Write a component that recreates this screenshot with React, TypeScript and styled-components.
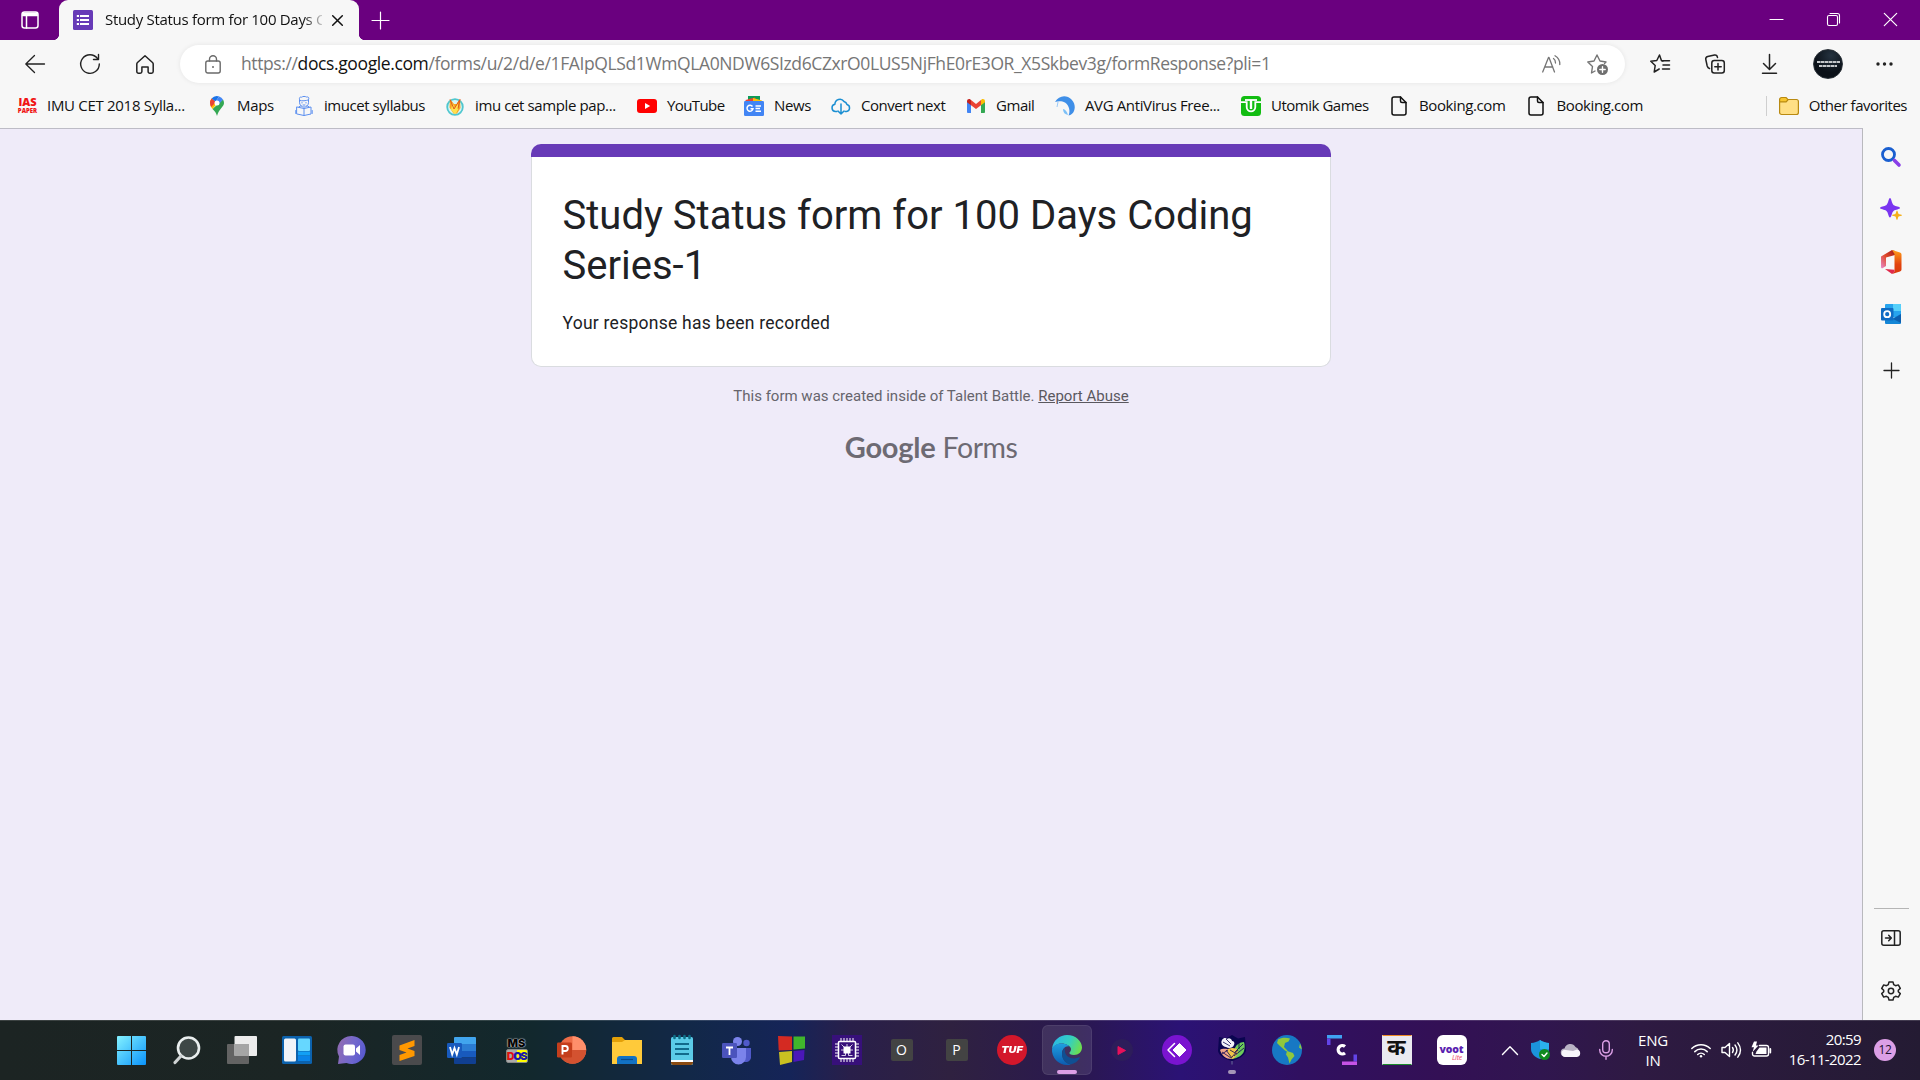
import React from "react";
import styled, { createGlobalStyle } from "styled-components";

const ui = `"Segoe UI", "Open Sans", "Noto Sans", sans-serif`;

const GlobalStyle = createGlobalStyle`
  *, *::before, *::after { box-sizing: border-box; }
  body { margin: 0; overflow: hidden; background: #efebf9; font-family: ${ui}; }
`;

const Screen = styled.div`
  width: 1920px;
  height: 1080px;
  display: flex;
  flex-direction: column;
  overflow: hidden;
`;

const Icon = styled.svg<{ $w?: number; $h?: number }>`
  display: block;
  flex: none;
  width: ${(p) => p.$w ?? 20}px;
  height: ${(p) => p.$h ?? p.$w ?? 20}px;
  overflow: visible;
`;

const Text = styled.span<{ $size?: number; $track?: number }>`
  display: block;
  padding-bottom: 2px;
  font-size: ${(p) => p.$size ?? 15}px;
  letter-spacing: ${(p) => p.$track ?? 0}px;
  white-space: nowrap;
`;

/* ---------- title bar ---------- */

const TitleBar = styled.header`
  flex: none;
  height: 40px;
  display: flex;
  background: #6a007f;
`;

const TabActions = styled.div`
  width: 59px;
  display: flex;
  align-items: center;
  padding-left: 21px;
  border-bottom-right-radius: 6px;
`;

const Tab = styled.div`
  position: relative;
  width: 300px;
  height: 40px;
  display: flex;
  align-items: center;
  padding-left: 14px;
  background: #f7f7f7;
  border-radius: 9px 9px 0 0;
  &::before,
  &::after {
    content: "";
    position: absolute;
    bottom: 0;
    width: 5px;
    height: 5px;
  }
  &::before {
    left: -5px;
    background: radial-gradient(circle at 0 0, transparent 4.6px, #f7f7f7 5px);
  }
  &::after {
    right: -5px;
    background: radial-gradient(circle at 100% 0, transparent 4.6px, #f7f7f7 5px);
  }
`;

const TabTitle = styled.div`
  width: 217px;
  margin-left: 12px;
  color: #111;
  mask-image: linear-gradient(90deg, #000 198px, transparent 222px);
`;

const CloseSlot = styled.div`
  width: 32px;
  margin-left: -0.5px;
  display: flex;
  justify-content: center;
`;

const NewTab = styled.div`
  width: 43px;
  display: flex;
  align-items: center;
  justify-content: center;
`;

const WindowButtons = styled.div`
  margin-left: auto;
  margin-right: 1px;
  padding-bottom: 1px;
  display: flex;
`;

const WindowButton = styled.div`
  width: 57px;
  display: flex;
  align-items: center;
  justify-content: center;
`;

/* ---------- toolbar ---------- */

const Toolbar = styled.div`
  flex: none;
  height: 48px;
  display: flex;
  align-items: center;
  padding-left: 7px;
  background: #f7f7f7;
`;

const Slot = styled.div<{ $w?: number }>`
  width: ${(p) => p.$w ?? 55}px;
  flex: none;
  display: flex;
  align-items: center;
  justify-content: center;
`;

const AddressBar = styled.div`
  flex: none;
  width: 1445px;
  height: 38px;
  margin: 0 7px 0 8px;
  padding: 0 5px 0 25px;
  display: flex;
  align-items: center;
  background: #fff;
  border-radius: 19px;
  box-shadow: 0 0 5px rgba(0, 0, 0, 0.08);
`;

const Url = styled.div`
  flex: 1;
  margin-left: 20px;
  color: #767676;
  white-space: nowrap;
`;

const Host = styled.span`
  color: #111;
`;

const Avatar = styled.div`
  width: 30px;
  height: 30px;
  border-radius: 50%;
  display: flex;
  flex-direction: column;
  align-items: center;
  justify-content: center;
  gap: 2px;
  background: radial-gradient(circle at 60% 20%, #24323f, #0b1118 60%);
  border: 1px solid #2a3138;
`;

const AvatarLine = styled.i<{ $w: number }>`
  width: ${(p) => p.$w}px;
  height: 2px;
  background: repeating-linear-gradient(90deg, #c4c7ca 0 3px, #70777e 3px 4px);
`;

/* ---------- bookmarks ---------- */

const Bookmarks = styled.nav`
  flex: none;
  height: 40px;
  padding: 0 13px 4px 17px;
  display: flex;
  align-items: center;
  background: #f7f7f7;
  color: #111;
`;

const Bookmark = styled.div<{ $w?: number }>`
  width: ${(p) => (p.$w ? `${p.$w}px` : "auto")};
  display: flex;
  align-items: center;
  gap: 11px;
  flex: none;
`;

const BookmarkIcon = styled.div`
  width: 19px;
  display: flex;
  justify-content: center;
`;

const Others = styled.div`
  margin-left: auto;
  height: 20px;
  padding-left: 12px;
  border-left: 1px solid #cfcfcf;
  display: flex;
  align-items: center;
  gap: 10px;
`;

const IasIcon = styled.div`
  width: 20px;
  margin-left: 2px;
  display: flex;
  flex-direction: column;
  align-items: center;
  color: #f01414;
  font: 800 11px/10px "Open Sans", sans-serif;
  & > small {
    font-size: 6px;
    line-height: 8px;
  }
`;

/* ---------- page ---------- */

const Body = styled.div`
  flex: 1;
  min-height: 0;
  display: flex;
`;

const Page = styled.main`
  width: 1863px;
  padding-top: 15px;
  border-top: 1px solid #bdbcc6;
  border-right: 1px solid #b9b9bd;
  background: #efebf9;
  display: flex;
  flex-direction: column;
  align-items: center;
  font-family: Roboto, sans-serif;
`;

const Card = styled.section`
  width: 800px;
  height: 223px;
  display: flex;
  flex-direction: column;
`;

const CardBand = styled.div`
  flex: none;
  height: 13px;
  border-radius: 10px 10px 0 0;
  background: #673ab7;
`;

const CardBody = styled.div`
  flex: 1;
  padding: 34px 30px 0 30.5px;
  background: #fff;
  border: 1px solid #dadce0;
  border-top: 0;
  border-radius: 0 0 10px 10px;
`;

const FormTitle = styled.h1`
  margin: 0;
  font-size: 40px;
  font-weight: 400;
  line-height: 50px;
  color: #202124;
`;

const Message = styled.p`
  margin: 20px 0 0;
  font-size: 17.5px;
  line-height: 25px;
  letter-spacing: 0.25px;
  color: #202124;
`;

const Disclaimer = styled.p`
  margin: 19px 0 0;
  font-size: 15px;
  line-height: 20px;
  color: #66646c;
`;

const Abuse = styled.a`
  color: #5a585f;
  text-decoration: underline;
`;

const Logo = styled.div`
  margin-top: 23px;
  display: flex;
  align-items: baseline;
  gap: 7px;
  color: #6d6a73;
  line-height: 36px;
`;

const LogoGoogle = styled.span`
  font-family: Lato, sans-serif;
  font-size: 29px;
  font-weight: 700;
  letter-spacing: -0.2px;
`;

const LogoForms = styled.span`
  font-family: Lato, sans-serif;
  font-size: 28.5px;
  font-weight: 400;
  letter-spacing: -0.5px;
`;

/* ---------- edge sidebar ---------- */

const Sidebar = styled.aside`
  flex: 1;
  padding: 2.5px 1px 3px 0;
  background: #f7f7f7;
  display: flex;
  flex-direction: column;
  align-items: center;
`;

const SideSlot = styled.div<{ $h?: number }>`
  height: ${(p) => p.$h ?? 52.5}px;
  display: flex;
  align-items: center;
`;

const SideRule = styled.div`
  width: 35px;
  height: 1px;
  margin-top: auto;
  margin-bottom: 3px;
  background: #b5b5b5;
`;

/* ---------- taskbar ---------- */

const Taskbar = styled.footer`
  flex: none;
  height: 60px;
  display: flex;
  align-items: center;
  box-shadow: inset 0 1px 0 rgba(255, 255, 255, 0.14);
  background: linear-gradient(
    90deg,
    #1c2423 0,
    #1b2524 300px,
    #12282d 530px,
    #122848 690px,
    #152458 790px,
    #291f4a 850px,
    #2f2140 950px,
    #2a1850 1080px,
    #2b1275 1180px,
    #301060 1300px,
    #331055 1440px,
    #30164f 1540px,
    #2e1a42 1640px,
    #241b33 1920px
  );
  color: #fff;
`;

const AppList = styled.div`
  display: flex;
  margin-left: 104px;
`;

const AppSlot = styled.div<{ $active?: boolean; $running?: boolean }>`
  position: relative;
  width: 50px;
  height: 50px;
  margin: 0 2.5px;
  display: flex;
  align-items: center;
  justify-content: center;
  border-radius: 6px;
  background: ${(p) => (p.$active ? "rgba(255,255,255,0.1)" : "none")};
  box-shadow: ${(p) => (p.$active ? "inset 0 0 0 1px rgba(255,255,255,0.07)" : "none")};
  &::after {
    content: "";
    display: ${(p) => (p.$active || p.$running ? "block" : "none")};
    position: absolute;
    bottom: 1px;
    left: 50%;
    width: ${(p) => (p.$active ? 20 : 8)}px;
    height: 4px;
    border-radius: 2px;
    transform: translateX(-50%);
    background: ${(p) => (p.$active ? "#dc9fe6" : "#a596b8")};
  }
`;

const LetterTile = styled.div`
  width: 22px;
  height: 22px;
  border-radius: 2px;
  background: #434343;
  display: flex;
  align-items: center;
  justify-content: center;
  font: 400 14px/22px "Open Sans", sans-serif;
`;

const Tuf = styled.div`
  width: 30px;
  height: 30px;
  border-radius: 50%;
  background: #d3172b;
  display: flex;
  align-items: center;
  justify-content: center;
  & > span {
    font: italic 900 9px/30px Inter, sans-serif;
    transform: scaleX(1.2);
  }
`;

const PlayTile = styled.div`
  width: 22px;
  height: 22px;
  border-radius: 50%;
  background: #2d1d5a;
  display: flex;
  align-items: center;
  justify-content: center;
`;

const HindiTile = styled.div`
  width: 30px;
  height: 30px;
  background: #eaeaf0;
  border: solid;
  border-width: 1px;
  border-color: #f08a24 #eaeaf0 #1b8a2c;
  color: #111;
  display: flex;
  align-items: center;
  justify-content: center;
  font: 700 22px/26px "Noto Sans Devanagari", "Noto Sans", sans-serif;
`;

const Voot = styled.div`
  width: 30px;
  height: 30px;
  border-radius: 6px;
  background: #fff;
  color: #5b1fb0;
  padding-top: 9px;
  display: flex;
  flex-direction: column;
  align-items: center;
  font: 800 10.5px/10px "Open Sans", sans-serif;
  letter-spacing: -0.2px;
  & > em {
    margin-left: 11px;
    font: italic 500 7px/7px "Open Sans", sans-serif;
    color: #f0486a;
  }
`;

const MsDos = styled.div`
  width: 24px;
  display: flex;
  flex-direction: column;
  align-items: center;
  color: #050505;
  font: 900 11px/12px Inter, sans-serif;
  text-shadow: 0 0 1px #ddd, 0 0 1px #ddd, 0 0 2px #aaa;
`;

const DosBox = styled.div`
  width: 22px;
  height: 14px;
  display: flex;
  justify-content: center;
  align-items: center;
  background: linear-gradient(90deg, #aaa 0 50%, #ff0 50%);
  border: 1px solid #888;
  border-radius: 2px;
  font: 900 11px/13px Inter, sans-serif;
  letter-spacing: -1.5px;
  text-shadow: none;
`;

const Ink = styled.b<{ $c: string }>`
  color: ${(p) => p.$c};
  font-weight: 900;
`;

const Tray = styled.div`
  margin-left: auto;
  display: flex;
  align-items: center;
  padding-right: 24px;
`;

const Lang = styled.div`
  width: 60px;
  padding: 0 6px 1px 0;
  text-align: center;
  font-size: 15px;
  line-height: 20px;
  letter-spacing: -0.2px;
`;

const Clock = styled.div`
  width: 85px;
  padding-bottom: 2px;
  text-align: right;
  font-size: 15px;
  line-height: 20px;
  letter-spacing: -0.6px;
`;

const Badge = styled.div`
  width: 22px;
  height: 22px;
  margin-left: 13px;
  border-radius: 50%;
  background: #dc9fe6;
  color: #201030;
  font-size: 12px;
  line-height: 21px;
  text-align: center;
  letter-spacing: -0.4px;
`;

const stroke = (color: string, w = 1.3) => ({
  fill: "none",
  stroke: color,
  strokeWidth: w,
  strokeLinecap: "round" as const,
  strokeLinejoin: "round" as const,
});

const FileIcon = () => (
  <Icon viewBox="0 0 16 20" $w={16} $h={20} {...stroke("#111", 1.5)}>
    <path d="M3 1h6.500L15 6.500V17a2 2 0 0 1-2 2H3a2 2 0 0 1-2-2V3a2 2 0 0 1 2-2z" />
    <path d="M9.500 1v4a1.500 1.500 0 0 0 1.500 1.500h4" />
  </Icon>
);

const bookmarks: { w: number; label: string; track: number; icon: React.ReactNode }[] = [
  {
    w: 190, label: "IMU CET 2018 Sylla...", track: -0.3,
    icon: <IasIcon>IAS<small>PAPER</small></IasIcon>,
  },
  {
    w: 87, label: "Maps", track: -0.3,
    icon: (
      <Icon viewBox="0 0 14 20" $w={14} $h={20}>
        <path d="M7 20c.8-3 2-5 4-7.500C13 10 14 9 14 7a7 7 0 0 0-1-3.600L2.500 13C5 15.500 6.200 17 7 20z" fill="#34a853" />
        <path d="M1.600 2.500A7 7 0 0 0 0 7c0 2.500 1 4 2.500 6L7.500 7z" fill="#fbbc04" />
        <path d="M0 7a7 7 0 0 1 1.600-4.500L6 6l-4.800 5A8 8 0 0 1 0 7z" fill="#ea4335" />
        <path d="M1.600 2.500A7 7 0 0 1 9.200.4L5.500 5.500z" fill="#1a73e8" />
        <path d="M9.200.4A7 7 0 0 1 13 3.400L8 9 5.500 5.500z" fill="#4285f4" />
        <circle cx="7" cy="7" r="2.500" fill="#fff" />
      </Icon>
    ),
  },
  {
    w: 151, label: "imucet syllabus", track: -0.45,
    icon: (
      <Icon viewBox="0 0 18 20" $w={18} $h={20} {...stroke("#5b8ff0", 1)}>
        <path d="M4.500 3.500C4 1.500 5 .8 6.500 1.200 8 .2 10 .2 11.500 1c2-.4 2.800.8 2 2.600v3a4.500 4.500 0 0 1-9 0zM4.500 4.500c3 .6 6 .4 9-.6M7 6.500v.5M11 6.500v.5M8 9h2" />
        <path d="M2 11l7 1.500L16 11v7l-7 1.500L2 18zM9 12.500v7M4 10.800l2-1M14 10.800l-2-1M.8 14.500v3M17.200 14.500v3" />
      </Icon>
    ),
  },
  {
    w: 192, label: "imu cet sample pap...", track: -0.38,
    icon: (
      <Icon viewBox="0 0 18 18" $w={18} $h={19}>
        <circle cx="9" cy="9.500" r="7.800" fill="#d8f4f4" stroke="#4fc7cf" strokeWidth="1.800" />
        <path d="M4 1.500l4 5h2.500l3.500-5 .5 9-3.500 5.500H7.500L3.500 10z" fill="#f6a623" />
        <path d="M6.500 5.500l2.500 5 3-5v6.500l-2 4H8l-3-4z" fill="#ffe14d" />
        <path d="M4 2l4 9.500 6-9.500-2 9" fill="none" stroke="#e0581c" />
      </Icon>
    ),
  },
  {
    w: 107, label: "YouTube", track: -0.6,
    icon: (
      <Icon viewBox="0 0 20 14" $w={20} $h={14}>
        <rect width="20" height="14" rx="3" fill="#f00" />
        <path d="M8 4l5.200 3L8 10z" fill="#fff" />
      </Icon>
    ),
  },
  {
    w: 87, label: "News", track: -0.4,
    icon: (
      <Icon viewBox="0 0 20 20" $w={20} $h={20}>
        <path d="M4 0h12v5H4z" fill="#0c9d58" />
        <path d="M1.500 4L11 1.500l2 6H2z" fill="#ea4335" />
        <path d="M9 2l9 2.500-1 3H9z" fill="#ffc107" />
        <rect y="5" width="20" height="15" rx="1.200" fill="#4285f4" />
        <path d="M8.500 10.500A3 3 0 1 0 9 12.700H6.500M11.500 10h5.500M11.500 12.600h4.500M11.500 15.200h5.500" fill="none" stroke="#fff" strokeWidth="1.500" />
      </Icon>
    ),
  },
  {
    w: 135, label: "Convert next", track: -0.45,
    icon: (
      <Icon viewBox="0 0 20 18" $w={20} $h={18} {...stroke("#1b8fd2", 1.500)}>
        <path d="M6 14.500H4.500a3.700 3.700 0 0 1-.6-7.300A5 5 0 0 1 13 4.500a4.300 4.300 0 0 1 3 3 3.600 3.600 0 0 1-.5 7H14" />
        <path d="M10 7v10M7 14l3 3 3-3" />
      </Icon>
    ),
  },
  {
    w: 89, label: "Gmail", track: -0.45,
    icon: (
      <Icon viewBox="0 0 18 14" $w={18} $h={14}>
        <path d="M0 2v10.500A1.200 1.200 0 0 0 1.200 14H4V5z" fill="#4285f4" />
        <path d="M18 2v10.500a1.200 1.200 0 0 1-1.200 1.500H14V5z" fill="#34a853" />
        <path d="M14 1l-5 4-5-4v5.200L9 10l5-3.800z" fill="#ea4335" />
        <path d="M0 2.200C0 .3 2-.6 3.400.5L4 1v5.200L0 3.300z" fill="#c5221f" />
        <path d="M18 2.200c0-1.900-2-2.800-3.400-1.700L14 1v5.200l4-2.900z" fill="#fbbc04" />
      </Icon>
    ),
  },
  {
    w: 186, label: "AVG AntiVirus Free...", track: -0.37,
    icon: (
      <Icon viewBox="0 0 20 20" $w={20} $h={20}>
        <path d="M0 6C3 1 8-1 13 1c6 3 8 9 6 14-1 2.500-3 4-5.500 4.500 2-4 1-10-3.500-13C7 4.800 3 5 0 6z" fill="#3f8fe8" />
        <path d="M8 13c2 .5 4 2 5 6-3-.5-5-2.500-5-6z" fill="#7cc0f7" />
        <path d="M3 6l-1 5" stroke="#9ccbf7" />
      </Icon>
    ),
  },
  {
    w: 148, label: "Utomik Games", track: -0.48,
    icon: (
      <Icon viewBox="0 0 20 20" $w={20} $h={20}>
        <rect width="20" height="20" rx="3.500" fill="#12bd12" />
        <path d="M0 6.200h5.700V11a4.300 4.300 0 0 0 8.600 0V6.200H20" fill="none" stroke="#fff" strokeWidth="1.800" />
        <path d="M10 4v9" stroke="#fff" strokeWidth="2.400" />
        <path d="M4 4h12" stroke="#fff" strokeWidth="1.800" />
      </Icon>
    ),
  },
  { w: 137.5, label: "Booking.com", track: -0.4, icon: <FileIcon /> },
  { w: 130, label: "Booking.com", track: -0.4, icon: <FileIcon /> },
];

const apps: { active?: boolean; running?: boolean; icon: React.ReactNode }[] = [
  {
    icon: (
      <Icon viewBox="0 0 29 29" $w={29}>
        <defs>
          <linearGradient id="win" x1="0" y1="0" x2="1" y2="1">
            <stop offset="0" stopColor="#84f2ff" />
            <stop offset="1" stopColor="#0a93fb" />
          </linearGradient>
        </defs>
        <path d="M0 1a1 1 0 0 1 1-1h13v14H0zM15 0h13a1 1 0 0 1 1 1v13H15zM0 15h14v14H1a1 1 0 0 1-1-1zM15 15h14v13a1 1 0 0 1-1 1H15z" fill="url(#win)" />
      </Icon>
    ),
  },
  {
    icon: (
      <Icon viewBox="0 0 28 28" $w={28}>
        <circle cx="15.500" cy="12" r="10.500" fill="#3d4746" stroke="#e9eeee" strokeWidth="2.600" />
        <path d="M8 20l-6 6.500" stroke="#cfd3d4" strokeWidth="3.200" strokeLinecap="round" />
      </Icon>
    ),
  },
  {
    icon: (
      <Icon viewBox="0 0 30 28" $w={30} $h={28}>
        <rect y="8" width="22" height="20" rx="1" fill="#636363" />
        <rect x="7.500" width="22.500" height="20" rx="1" fill="#ececec" />
        <path d="M7.500 8H22v12H7.500z" fill="#a5a5a5" />
      </Icon>
    ),
  },
  {
    icon: (
      <Icon viewBox="0 0 30 28" $w={30} $h={28}>
        <rect width="30" height="28" rx="1.500" fill="#0c62ad" />
        <rect x="2" y="2.500" width="12" height="23" rx="1.500" fill="#f1f4f8" />
        <rect x="16" y="2.500" width="12" height="12.500" rx="1" fill="#66d7ff" />
        <path d="M16 15.500h12v4H16z" fill="#12a0f5" />
        <path d="M16 20h12v5H16z" fill="#0a84e8" />
      </Icon>
    ),
  },
  {
    icon: (
      <Icon viewBox="0 0 29 28" $w={29} $h={28}>
        <defs>
          <linearGradient id="chat" x1="0" y1="0.500" x2="1" y2="0.800">
            <stop offset="0" stopColor="#8d6bb5" />
            <stop offset=".5" stopColor="#7268cd" />
            <stop offset="1" stopColor="#5457d0" />
          </linearGradient>
        </defs>
        <path d="M15 0a14 14 0 1 1-5.500 27L1 28l1-7.500A14 14 0 0 1 15 0z" fill="url(#chat)" />
        <rect x="6.500" y="8.500" width="11.500" height="11" rx="2" fill="#fff" />
        <path d="M19 12.500L23 9v10l-4-3.500z" fill="#fff" />
      </Icon>
    ),
  },
  {
    icon: (
      <Icon viewBox="0 0 30 30" $w={30}>
        <rect width="30" height="30" rx="2" fill="#4a4a4c" />
        <path d="M7.500 10.500L22.500 5v6l-7 2.500 7 2.500v5l-15 5v-6l7-2.500-7-2.500z" fill="#ff9800" />
      </Icon>
    ),
  },
  {
    icon: (
      <Icon viewBox="0 0 29 27" $w={29} $h={27}>
        <path d="M7 1a1 1 0 0 1 1-1h20a1 1 0 0 1 1 1v6H7z" fill="#41a5ee" />
        <path d="M7 7h22v7H7z" fill="#2b7cd3" />
        <path d="M7 14h22v6.500H7z" fill="#185abd" />
        <path d="M7 20.500h22V26a1 1 0 0 1-1 1H8a1 1 0 0 1-1-1z" fill="#103f91" />
        <rect y="6" width="15" height="15" rx="1.200" fill="#185abd" />
        <path d="M3 10l2.200 7.500L7.500 11l2.300 6.500L12 10" fill="none" stroke="#fff" strokeWidth="1.800" />
      </Icon>
    ),
  },
  {
    icon: (
      <MsDos>
        MS
        <DosBox><Ink $c="#e01010">D</Ink><Ink $c="#1a1aa8">O</Ink><Ink $c="#1a1aa8">S</Ink></DosBox>
      </MsDos>
    ),
  },
  {
    icon: (
      <Icon viewBox="0 0 29 28" $w={29} $h={28}>
        <circle cx="15.500" cy="14" r="13.700" fill="#ed6c47" />
        <path d="M15.500.3A13.700 13.700 0 0 1 29.200 14H15.500z" fill="#ff8f6b" />
        <path d="M1.800 14a13.700 13.700 0 0 0 27.400 0z" fill="#d35230" />
        <rect y="6.500" width="15" height="15" rx="1.200" fill="#c43e1c" />
        <path d="M5.500 18.500V10h2.800a2.500 2.500 0 0 1 0 5H5.500" fill="none" stroke="#fff" strokeWidth="1.900" />
      </Icon>
    ),
  },
  {
    icon: (
      <Icon viewBox="0 0 30 27" $w={30} $h={27}>
        <path d="M0 1.500A1.500 1.500 0 0 1 1.500 0H10l3 3v5H0z" fill="#e3a008" />
        <path d="M0 5h10l3-2h17v24H0z" fill="#ffca3a" />
        <path d="M5 27v-5a3 3 0 0 1 3-3h14a3 3 0 0 1 3 3v5z" fill="#1272c4" />
        <path d="M9 22.500h12" stroke="#0a4a8a" strokeWidth="1.200" />
      </Icon>
    ),
  },
  {
    icon: (
      <Icon viewBox="0 0 22 30" $w={22} $h={30}>
        <rect y="2" width="22" height="28" rx="1.500" fill="#5bcbe8" />
        <path d="M0 25.500h22V28a2 2 0 0 1-2 2H2a2 2 0 0 1-2-2z" fill="#8a4b12" />
        <path d="M0 25h22v2H0z" fill="#fff" />
        <path d="M4 9h14M4 14h14M4 19h14" stroke="#126a8c" strokeWidth="1.800" />
        <path d="M3.500 1v2M8.500 1v2M13.500 1v2M18.500 1v2" stroke="#0e6f86" strokeWidth="2.600" strokeLinecap="round" />
      </Icon>
    ),
  },
  {
    icon: (
      <Icon viewBox="0 0 29 27" $w={29} $h={27}>
        <circle cx="24.500" cy="6" r="3.200" fill="#5059c9" />
        <path d="M19 11h10v8a5 5 0 0 1-10 2z" fill="#5059c9" />
        <circle cx="15.500" cy="4.500" r="4.500" fill="#7b83eb" />
        <path d="M9 11h15v9a7.500 7.500 0 0 1-15 0z" fill="#7b83eb" />
        <rect y="6" width="15" height="15" rx="1.200" fill="#4b53bc" />
        <path d="M4 10.500h7M7.500 10.500V18" stroke="#fff" strokeWidth="1.800" />
      </Icon>
    ),
  },
  {
    icon: (
      <Icon viewBox="0 0 27 29" $w={27} $h={29}>
        <path d="M0 0l14 .5V14L.7 14.500z" fill="#d42a22" />
        <path d="M15.500.5H27v12l-11.500 1z" fill="#40b52c" />
        <path d="M1 16l13-1v11L2 29z" fill="#c9c021" />
        <path d="M15.500 15l11-1-.5 10-10.500 2z" fill="#4a17b8" />
      </Icon>
    ),
  },
  {
    icon: (
      <Icon viewBox="0 0 30 30" $w={30} fill="none" stroke="#fff">
        <path d="M0 0h30v30H0z" fill="#37107a" stroke="none" />
        <rect x="6.500" y="6.500" width="17" height="17" rx="1" strokeWidth="1.500" />
        <path d="M9 3v3M12 3v3M15 3v3M18 3v3M21 3v3M9 24v3M12 24v3M15 24v3M18 24v3M21 24v3M3 9h3M3 12h3M3 15h3M3 18h3M3 21h3M24 9h3M24 12h3M24 15h3M24 18h3M24 21h3" />
        <rect x="12" y="12" width="6" height="6" fill="#fff" />
        <path d="M9.500 9.500l3 3M20.500 9.500l-3 3M9.500 20.500h4V18M20.500 20.500h-4V18M9 15h3M18 15h3M15 9v3" strokeWidth=".8" />
      </Icon>
    ),
  },
  { icon: <LetterTile>O</LetterTile> },
  { icon: <LetterTile>P</LetterTile> },
  { icon: <Tuf><span>TUF</span></Tuf> },
  {
    active: true,
    icon: (
      <Icon viewBox="0 0 30 30" $w={30}>
        <defs>
          <linearGradient id="edgeTop" x1="0" y1=".3" x2="1" y2=".6">
            <stop offset="0" stopColor="#2bb7e6" />
            <stop offset=".55" stopColor="#35cfc0" />
            <stop offset="1" stopColor="#6fe04a" />
          </linearGradient>
          <linearGradient id="edgeLeft" x1="0" y1="0" x2="0" y2="1">
            <stop offset="0" stopColor="#1f9fe0" />
            <stop offset="1" stopColor="#0c5bb0" />
          </linearGradient>
        </defs>
        <path d="M0 14C1 5 8 0 15 0c9 0 15 6.500 15 12.500 0 4.500-3.500 7.500-8 7.500-3.500 0-5-1-4.500-2.500 1-1 1.500-2 1.500-3.500C19 11 14 8.500 9.500 8.500 5 8.500 1.500 11 0 14z" fill="url(#edgeTop)" />
        <path d="M0 14c1.500-3.500 5-5.500 9.500-5.500 3 0 6 1 8 3-4-1-7.500 2.500-7.500 7C10 24 14 29 19 29.500c-1.300.4-2.600.5-4 .5A15 15 0 0 1 0 14z" fill="url(#edgeLeft)" />
        <path d="M13 13c-2 1.500-3 3.500-3 6 0 5.500 4.500 10.500 9.500 10.300 3.500-1 6.500-3.300 8.300-6.300.4-.8-.2-1-.8-.7-5 2.500-13 .7-14-5.300-.2-1.500 0-3 0-4z" fill="#104f92" />
      </Icon>
    ),
  },
  {
    icon: (
      <PlayTile>
        <Icon viewBox="0 0 9 9" $w={9}><path d="M1 .5L8.500 4.500 1 8.500z" fill="#e8105a" stroke="#e8105a" strokeLinejoin="round" /></Icon>
      </PlayTile>
    ),
  },
  {
    icon: (
      <Icon viewBox="0 0 30 30" $w={30}>
        <circle cx="15" cy="15" r="15" fill="#7a14d0" />
        <path d="M17.500 8.500l6.500 6.500-6.500 6.500-6.500-6.500z" fill="#fff" stroke="#fff" strokeLinejoin="round" />
        <path d="M12.500 8.500L6 15l6.500 6.500" {...stroke("#fff", 1.500)} />
      </Icon>
    ),
  },
  {
    running: true,
    icon: (
      <Icon viewBox="0 0 30 30" $w={30}>
        <path d="M2 2l7 1.500L15 0l6 3.500L28 2l1 14c-2 5-7 8-14 10C8 24 2 21 1 16z" fill="#0a0550" />
        <path d="M5 5c2-3 4-2 5-1 2-2 5 0 5 2 2 0 3 2 2 4-1 3-5 4-8 2-3 0-6-4-4-7z" fill="#f3f3f8" />
        <path d="M6 7l7 4M9 4l5 5" stroke="#0a0550" strokeWidth=".8" />
        <path d="M3 15c3-2 7-1 10 0 3 3 2 7 1 9-5 0-9-3-11-9z" fill="#f0a58b" />
        <path d="M27 7c-4 0-8 3-9 6l-3 11c6-1 11-4 12-8 .8-3 1-6 0-9z" fill="#6ccb5a" />
        <path d="M11 14c4-2 8-1 10 1 0 5-3 8-6 9-3-2-5-6-4-10z" fill="#f2c64a" />
        <path d="M5 17l9 6M9 15l6 8M26 9l-8 8M27 13l-10 8M22 8v6M13 15l7 4M21 15l-6 7M5 19l6-4" stroke="#0a0550" strokeWidth=".8" />
        <path d="M15 26v3.500" stroke="#6b6f99" />
      </Icon>
    ),
  },
  {
    icon: (
      <Icon viewBox="0 0 30 30" $w={30}>
        <circle cx="15" cy="15" r="15" fill="#1778c4" />
        <path d="M6 4.500C9 2.500 14 2 18 3.500l-1.500 3L13 8l-1 4 3 3 1 2-3-1.500L8 11 5 8z" fill="#8fc83e" />
        <path d="M15 16l6 2 1.500 3-3 3.500-2 4-1.500-6-2-3z" fill="#8fc83e" />
        <path d="M28 8.500l-1 4 2.800 2A15 15 0 0 0 28 8.500z" fill="#8fc83e" />
      </Icon>
    ),
  },
  {
    icon: (
      <Icon viewBox="0 0 30 30" $w={30}>
        <path d="M0 0h15v3.500H0z" fill="#3fa3f2" />
        <path d="M0 3.500h3.500V10H0z" fill="#6244e8" />
        <path d="M26.500 19.500H30v7h-3.500z" fill="#6244e8" />
        <path d="M15 26.500h15V30H15z" fill="#c653e6" />
        <path d="M18 11.500a4.200 4.200 0 1 0 0 6.500" fill="none" stroke="#fff" strokeWidth="3.200" />
      </Icon>
    ),
  },
  { icon: <HindiTile>क</HindiTile> },
  { icon: <Voot>voot<em>Lite</em></Voot> },
];

export default function App() {
  return (
    <Screen>
      <GlobalStyle />
      <TitleBar>
        <TabActions>
          <Icon viewBox="0 0 18 18" $w={18} {...stroke("#fff", 1.500)}>
            <rect x="1" y="1" width="16" height="16" rx="2.500" />
            <path d="M2 2.500h14M2 4.200h14" strokeWidth="2.200" />
            <path d="M5.500 5v12" />
          </Icon>
        </TabActions>
        <Tab>
          <Icon viewBox="0 0 20 20" $w={20}>
            <rect width="20" height="20" rx="1.500" fill="#673ab7" />
            <path d="M7 6h9M7 10h9M7 14h9" stroke="#fff" strokeWidth="2.200" />
            <path d="M3.800 6H6M3.800 10H6M3.800 14H6" stroke="#fff" strokeWidth="2.200" />
          </Icon>
          <TabTitle><Text $track={-0.3}>Study Status form for 100 Days C</Text></TabTitle>
          <CloseSlot>
            <Icon viewBox="0 0 11 11" $w={11} {...stroke("#111", 1.500)}><path d="M.7.7l9.600 9.600M10.300.7L.7 10.300" /></Icon>
          </CloseSlot>
        </Tab>
        <NewTab>
          <Icon viewBox="0 0 17 17" $w={17} {...stroke("#fff", 1.200)}><path d="M8.500 0v17M0 8.500h17" /></Icon>
        </NewTab>
        <WindowButtons>
          <WindowButton><Icon viewBox="0 0 13 13" $w={13} {...stroke("#fff", 1.200)}><path d="M0 6.500h13" /></Icon></WindowButton>
          <WindowButton>
            <Icon viewBox="0 0 13 13" $w={13} {...stroke("#fff", 1.100)}>
              <rect x=".5" y="2.500" width="10" height="10" rx="1.500" />
              <path d="M3 .5h7.500a2 2 0 0 1 2 2V10" />
            </Icon>
          </WindowButton>
          <WindowButton><Icon viewBox="0 0 13 13" $w={13} {...stroke("#fff", 1.200)}><path d="M.3.3l12.400 12.400M12.700.3L.3 12.700" /></Icon></WindowButton>
        </WindowButtons>
      </TitleBar>

      <Toolbar>
        <Slot><Icon viewBox="0 0 20 18" $w={20} $h={18} {...stroke("#222", 1.300)}><path d="M19.500 9H.8M9.500.5L.8 9l8.700 8.500" /></Icon></Slot>
        <Slot>
          <Icon viewBox="0 0 20 20" $w={20} {...stroke("#222", 1.400)}>
            <path d="M17.500 4.500A9.300 9.300 0 1 0 19.300 10" />
            <path d="M18.500.5v5h-5" />
          </Icon>
        </Slot>
        <Slot>
          <Icon viewBox="0 0 18 19" $w={18} $h={19} {...stroke("#222", 1.500)}>
            <path d="M9 .8l7.500 6.700c.5.500.7 1 .7 1.600v7.400a1.700 1.700 0 0 1-1.700 1.700h-1.700a1.700 1.700 0 0 1-1.700-1.700V12H5.900v4.500a1.700 1.700 0 0 1-1.700 1.700H2.500a1.700 1.700 0 0 1-1.700-1.700V9.100c0-.6.200-1.100.7-1.600z" />
          </Icon>
        </Slot>
        <AddressBar>
          <Icon viewBox="0 0 16 19" $w={16} $h={19} {...stroke("#6a6a6a", 1.400)}>
            <rect x=".8" y="6" width="14.400" height="12" rx="2" />
            <path d="M4.500 6V4.200a3.500 3.500 0 0 1 7 0V6" />
            <circle cx="8" cy="12" r="1" fill="#6a6a6a" stroke="none" />
          </Icon>
          <Url><Text $size={17.5} $track={-0.385}>https://<Host>docs.google.com</Host>/forms/u/2/d/e/1FAIpQLSd1WmQLA0NDW6SIzd6CZxrO0LUS5NjFhE0rE3OR_X5Skbev3g/formResponse?pli=1</Text></Url>
          <Slot $w={46}>
            <Icon viewBox="0 0 19 18" $w={19} $h={18} {...stroke("#757575", 1.300)}>
              <path d="M.7 17L6.500 2.500h.5L12.500 17M2.800 12h8" />
              <path d="M11.500 3.500c1.500 1 2 2.500 2 4.500M13 .7c3.500 2 5 5 4.800 8.800" />
            </Icon>
          </Slot>
          <Slot $w={46}>
            <Icon viewBox="0 0 21 21" $w={21} {...stroke("#757575", 1.400)}>
              <path d="M8 17l-3.500 2 1-6.500L.8 8l6.200-1L10 1l3 6 6 1-1.500 1.500" />
              <circle cx="15.500" cy="15.500" r="5.500" fill="#6f6f6f" stroke="none" />
              <path d="M15.500 12.800v5.400M12.800 15.500h5.400" stroke="#fff" />
            </Icon>
          </Slot>
        </AddressBar>
        <Slot>
          <Icon viewBox="0 0 20 20" $w={20} {...stroke("#222", 1.500)}>
            <path d="M13 7l-1.500-.2L9.500 1 6.800 6.500.8 7.300l4.400 4.200L4.200 18l5-3" />
            <path d="M12.500 6.800H19.500M13 11h6.500M12.500 15h7" />
          </Icon>
        </Slot>
        <Slot>
          <Icon viewBox="0 0 20 20" $w={20} {...stroke("#222", 1.500)}>
            <rect x="6.800" y="6.500" width="12.500" height="12.500" rx="2.500" />
            <path d="M13 9.500v6.500M9.800 12.800h6.400M4.500 14.500C2.800 14 2.500 13 2.200 12L.8 5.500C.5 4 1.200 2.900 2.700 2.500L9.500 1c1.500-.3 2.700.5 3 2.500" />
          </Icon>
        </Slot>
        <Slot>
          <Icon viewBox="0 0 15 20" $w={15} $h={20} {...stroke("#222", 1.500)}><path d="M7.500.5v14.500M1.500 9.500l6 6 6-6M.5 19.300h14" /></Icon>
        </Slot>
        <Slot $w={62}><Avatar><AvatarLine $w={23} /><AvatarLine $w={18} /></Avatar></Slot>
        <Slot $w={51}>
          <Icon viewBox="0 0 17 4" $w={17} $h={4} fill="#222"><circle cx="2" cy="2" r="1.700" /><circle cx="8.500" cy="2" r="1.700" /><circle cx="15" cy="2" r="1.700" /></Icon>
        </Slot>
      </Toolbar>

      <Bookmarks>
        {bookmarks.map((b, i) => (
          <Bookmark key={i} $w={b.w}>
            <BookmarkIcon>{b.icon}</BookmarkIcon>
            <Text $track={b.track}>{b.label}</Text>
          </Bookmark>
        ))}
        <Others>
          <Icon viewBox="0 0 20 18" $w={20} $h={18} stroke="#b98a12" strokeWidth="1.200">
            <rect x=".6" y="2.500" width="18.800" height="15" rx="2" fill="#ffdf85" />
            <path d="M.6 2.500a2 2 0 0 1 2-2h4.500l2 2.200-2 2.200H.6z" fill="#f7c52e" />
          </Icon>
          <Text $track={-0.48}>Other favorites</Text>
        </Others>
      </Bookmarks>

      <Body>
        <Page>
          <Card>
            <CardBand />
            <CardBody>
              <FormTitle>Study Status form for 100 Days Coding Series-1</FormTitle>
              <Message>Your response has been recorded</Message>
            </CardBody>
          </Card>
          <Disclaimer>This form was created inside of Talent Battle. <Abuse>Report Abuse</Abuse></Disclaimer>
          <Logo><LogoGoogle>Google</LogoGoogle><LogoForms>Forms</LogoForms></Logo>
        </Page>
        <Sidebar>
          <SideSlot>
            <Icon viewBox="0 0 20 20" $w={20}>
              <circle cx="7.500" cy="7.500" r="6" fill="none" stroke="#1a5fd0" strokeWidth="2.800" />
              <path d="M13.500 13.500L18 18" stroke="#8a3fe8" strokeWidth="3.600" strokeLinecap="round" />
            </Icon>
          </SideSlot>
          <SideSlot>
            <Icon viewBox="0 0 22 22" $w={22}>
              <path d="M10 0c1.500 0 1.800 6 3.800 7.300 1.500 1 6.200 1.400 6.200 2.700s-4.700 1.500-6.200 2.700C11.800 14 11.500 19.500 10 19.500s-1.800-5.500-3.800-6.800C4.700 11.500 0 11.200 0 10s4.700-1.700 6.200-2.700C8.200 6 8.500 0 10 0z" fill="#7a35f0" />
              <path d="M17 12.500c.8 0 .9 2.800 1.600 3.400.6.500 3.400.5 3.400 1.300s-2.800.8-3.400 1.300c-.7.600-.8 3.500-1.600 3.500s-.9-2.900-1.600-3.500c-.6-.5-3.400-.5-3.400-1.300s2.800-.8 3.400-1.300c.7-.6.800-3.400 1.600-3.400z" fill="#f5b01a" />
            </Icon>
          </SideSlot>
          <SideSlot>
            <Icon viewBox="0 0 21 24" $w={21} $h={24}>
              <defs>
                <linearGradient id="officeLeft" x1="1" y1="0" x2="0" y2="1">
                  <stop offset="0" stopColor="#a01818" />
                  <stop offset=".5" stopColor="#e04a2a" />
                  <stop offset="1" stopColor="#e88ad0" />
                </linearGradient>
                <linearGradient id="officeRight" x1="0" y1="0" x2="0" y2="1">
                  <stop offset="0" stopColor="#ff9f1a" />
                  <stop offset=".6" stopColor="#e2430e" />
                  <stop offset="1" stopColor="#d93a0b" />
                </linearGradient>
              </defs>
              <path d="M0 6.500L11 0l3 1v4L5 7.500v8.500l-4 2.500-1-1z" fill="url(#officeLeft)" />
              <path d="M11 0l8 2.500a2 2 0 0 1 1.500 2v15a2 2 0 0 1-1.500 2L11 24l2.500-2.500V4z" fill="url(#officeRight)" />
              <path d="M4 19l9.500.8V22L11 24z" fill="#e02a4c" />
            </Icon>
          </SideSlot>
          <SideSlot>
            <Icon viewBox="0 0 20 20" $w={20}>
              <path d="M4 1a1 1 0 0 1 1-1h14a1 1 0 0 1 1 1v12H4z" fill="#27a4ee" />
              <path d="M12 0h7a1 1 0 0 1 1 1v6h-8z" fill="#56d0fa" />
              <path d="M4 11l8 3 8-4v9a1 1 0 0 1-1 1H5a1 1 0 0 1-1-1z" fill="#1486d6" />
              <path d="M12 15l8-5v9z" fill="#0c5fb0" />
              <rect y="4" width="12.500" height="12.500" rx="1" fill="#0f6cc4" />
              <circle cx="6.200" cy="10.200" r="3" fill="none" stroke="#fff" strokeWidth="1.800" />
            </Icon>
          </SideSlot>
          <SideSlot $h={60}>
            <Icon viewBox="0 0 15 15" $w={15} {...stroke("#222", 1.300)}><path d="M7.500 0v15M0 7.500h15" /></Icon>
          </SideSlot>
          <SideRule />
          <SideSlot>
            <Icon viewBox="0 0 20 16" $w={20} $h={16} {...stroke("#222", 1.500)}>
              <rect x=".8" y=".8" width="18.400" height="14.400" rx="2" />
              <path d="M13.500 1v14M4.500 8H10M7.700 5.300L10.300 8l-2.600 2.700" />
            </Icon>
          </SideSlot>
          <SideSlot>
            <Icon viewBox="0 0 20 20" $w={20} {...stroke("#222", 1.500)}>
              <circle cx="10" cy="10" r="2.700" />
              <path d="M8 .9h4l.7 2.700 1.900 1.100 2.700-.8 2 3.500-2 1.900v1.400l2 1.900-2 3.500-2.700-.8-1.900 1.100-.7 2.700H8l-.7-2.700-1.900-1.100-2.700.8-2-3.500 2-1.900V9.300l-2-1.900 2-3.500 2.700.8 1.900-1.100z" />
            </Icon>
          </SideSlot>
        </Sidebar>
      </Body>

      <Taskbar>
        <AppList>
          {apps.map((a, i) => (
            <AppSlot key={i} $active={a.active} $running={a.running}>{a.icon}</AppSlot>
          ))}
        </AppList>
        <Tray>
          <Slot $w={30}><Icon viewBox="0 0 16 9" $w={16} $h={9} {...stroke("#fff", 1.400)}><path d="M.5 8.500L8 .8l7.500 7.700" /></Icon></Slot>
          <Slot $w={30}>
            <Icon viewBox="0 0 19 20" $w={19} $h={20}>
              <path d="M9 0c2.500 1.800 5.500 2.800 9 3v6c0 4.500-3.500 8-9 10C3.500 17 0 13.500 0 9V3c3.500-.2 6.500-1.200 9-3z" fill="#1b93dc" />
              <path d="M9 0c2.500 1.800 5.500 2.800 9 3v6H9z" fill="#2bb0ee" />
              <circle cx="13.500" cy="14.500" r="5.500" fill="#0f8a1f" />
              <path d="M11 14.500l2 2 3-3.500" {...stroke("#fff", 1.400)} />
            </Icon>
          </Slot>
          <Slot $w={31}>
            <Icon viewBox="0 0 20 13" $w={20} $h={13}>
              <path d="M4 12.500a4 4 0 0 1-.5-8A6 6 0 0 1 14.500 3 5 5 0 0 1 18 7z" fill="#b9b3c4" />
              <path d="M4 13a3.800 3.800 0 0 1-1-7.300l9 1.300 4-1.500a3.800 3.800 0 0 1 0 7.500z" fill="#f7f5fa" />
            </Icon>
          </Slot>
          <Slot $w={40}>
            <Icon viewBox="0 0 14 20" $w={14} $h={20} {...stroke("#dc9fe6", 1.400)}>
              <rect x="3.700" y=".8" width="6.600" height="12" rx="3.300" />
              <path d="M.7 9.500v.5a6.300 6.300 0 0 0 12.600 0v-.5M7 16.300v3" />
            </Icon>
          </Slot>
          <Lang>ENG<br />IN</Lang>
          <Slot $w={30}>
            <Icon viewBox="0 0 20 15" $w={20} $h={15} {...stroke("#fff", 1.500)}>
              <path d="M.8 5.500a13 13 0 0 1 18.400 0M3.800 8.600a8.800 8.800 0 0 1 12.400 0M6.700 11.500a4.700 4.700 0 0 1 6.600 0" />
              <circle cx="10" cy="13.300" r="1.200" fill="#fff" stroke="none" />
            </Icon>
          </Slot>
          <Slot $w={30}>
            <Icon viewBox="0 0 20 16" $w={20} $h={16} {...stroke("#fff", 1.400)}>
              <path d="M1 5.500h3L8.500 1.500v13L4 10.500H1z" />
              <path d="M11.500 5.500c1 1.500 1 3.500 0 5M14 3c2.300 3 2.300 7 0 10M16.800.8c3.300 4.400 3.300 10 0 14.400" />
            </Icon>
          </Slot>
          <Slot $w={30}>
            <Icon viewBox="0 0 20 16" $w={20} $h={16} {...stroke("#fff", 1.400)}>
              <path d="M8.500 3.500h7a2 2 0 0 1 2 2v6.500a2 2 0 0 1-2 2H3.500a2 2 0 0 1-2-2v-1.500" />
              <path d="M8.500 5.500H15.500v6.500H4.500l1-2.500z" fill="#fff" stroke="none" />
              <path d="M19.300 7v3.500" strokeWidth="1.800" />
              <path d="M3-.5L.5 5.200H3L1.500 10 7.500 3.500H5L6-.5z" fill="#fff" stroke="none" />
            </Icon>
          </Slot>
          <Clock>20:59<br />16-11-2022</Clock>
          <Badge>12</Badge>
        </Tray>
      </Taskbar>
    </Screen>
  );
}
